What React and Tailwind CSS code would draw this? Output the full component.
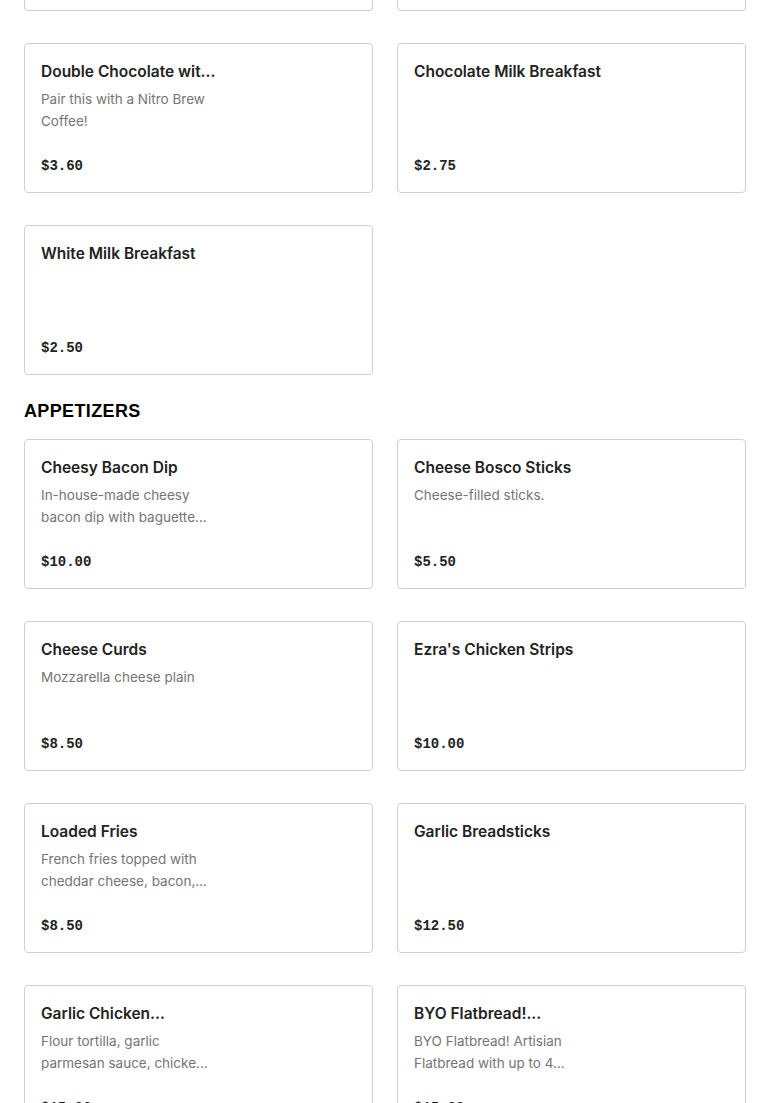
import React from "react";

const sans = "font-['Inter','Liberation_Sans',sans-serif]";

const breakfast = [
  { name: "Double Chocolate wit...", desc: "Pair this with a Nitro Brew Coffee!", price: "$3.60" },
  { name: "Chocolate Milk Breakfast", desc: "", price: "$2.75" },
  { name: "White Milk Breakfast", desc: "", price: "$2.50" },
];

const appetizers = [
  { name: "Cheesy Bacon Dip", desc: "In-house-made cheesy bacon dip with baguette...", price: "$10.00" },
  { name: "Cheese Bosco Sticks", desc: "Cheese-filled sticks.", price: "$5.50" },
  { name: "Cheese Curds", desc: "Mozzarella cheese plain", price: "$8.50" },
  { name: "Ezra's Chicken Strips", desc: "", price: "$10.00" },
  { name: "Loaded Fries", desc: "French fries topped with cheddar cheese, bacon,...", price: "$8.50" },
  { name: "Garlic Breadsticks", desc: "", price: "$12.50" },
  { name: "Garlic Chicken...", desc: "Flour tortilla, garlic parmesan sauce, chicke...", price: "$15.00" },
  { name: "BYO Flatbread!...", desc: "BYO Flatbread! Artisian Flatbread with up to 4...", price: "$15.00" },
];

function ItemCard({ item }) {
  return (
    <div className="h-[150px] border border-[#cfcfcf] rounded-[4px] bg-white p-4 flex flex-col">
      <div className={`${sans} text-[15.5px] leading-6 font-semibold text-[#222] whitespace-nowrap`}>
        {item.name}
      </div>
      {item.desc && (
        <p className={`${sans} mt-1 w-[172px] text-[13.5px] leading-[22px] text-[#757575]`}>
          {item.desc}
        </p>
      )}
      <div className="mt-auto font-['Liberation_Mono',monospace] font-bold text-[14px] leading-5 text-[#222]">
        {item.price}
      </div>
    </div>
  );
}

export default function App() {
  return (
    <div className="bg-white min-h-screen px-6">
      {/* bottom edge of the previous row, scrolled out of view */}
      <div className="grid grid-cols-2 gap-x-6 h-[11px]">
        <div className="border border-t-0 border-[#cfcfcf] rounded-b-[4px]" />
        <div className="border border-t-0 border-[#cfcfcf] rounded-b-[4px]" />
      </div>
      <div className="grid grid-cols-2 gap-x-6 gap-y-8 mt-8">
        {breakfast.map((item) => (
          <ItemCard key={item.name} item={item} />
        ))}
      </div>
      <h2 className="mt-6 mb-4 font-['Liberation_Sans',sans-serif] font-black text-[18px] leading-6 text-black tracking-[0.02em]">
        APPETIZERS
      </h2>
      <div className="grid grid-cols-2 gap-x-6 gap-y-8 pb-10">
        {appetizers.map((item) => (
          <ItemCard key={item.name} item={item} />
        ))}
      </div>
    </div>
  );
}
